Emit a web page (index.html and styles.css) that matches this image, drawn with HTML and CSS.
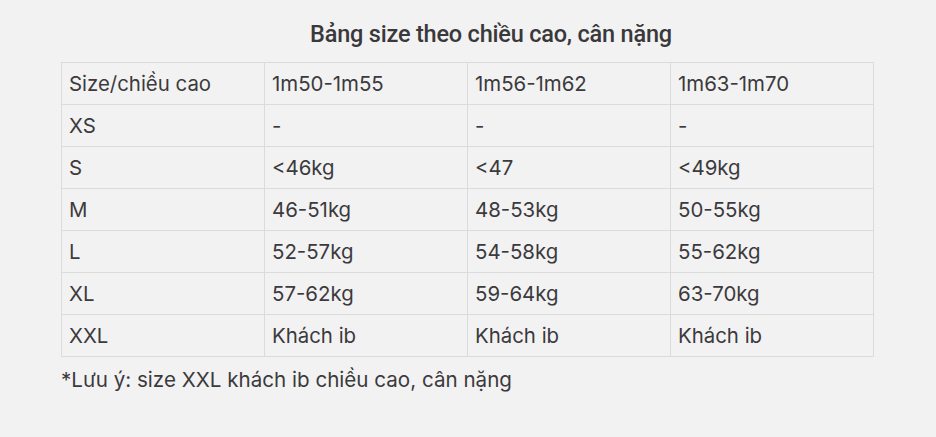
FILE: index.html
```html
<!DOCTYPE html>
<html lang="vi">
<head>
<meta charset="utf-8">
<link rel="stylesheet" href="styles.css">
</head>
<body>
<div class="page">
  <h1 class="title">Bảng size theo chiều cao, cân nặng</h1>
  <table class="size-table">
    <tr><td>Size/chiều cao</td><td>1m50-1m55</td><td>1m56-1m62</td><td>1m63-1m70</td></tr>
    <tr><td>XS</td><td>-</td><td>-</td><td>-</td></tr>
    <tr><td>S</td><td>&lt;46kg</td><td>&lt;47</td><td>&lt;49kg</td></tr>
    <tr><td>M</td><td>46-51kg</td><td>48-53kg</td><td>50-55kg</td></tr>
    <tr><td>L</td><td>52-57kg</td><td>54-58kg</td><td>55-62kg</td></tr>
    <tr><td>XL</td><td>57-62kg</td><td>59-64kg</td><td>63-70kg</td></tr>
    <tr><td>XXL</td><td>Khách ib</td><td>Khách ib</td><td>Khách ib</td></tr>
  </table>
  <p class="note">*Lưu ý: size XXL khách ib chiều cao, cân nặng</p>
</div>
</body>
</html>
```
FILE: styles.css
```css
html, body {
  margin: 0;
  padding: 0;
}
body {
  width: 936px;
  height: 437px;
  background: #f3f2f2;
  color: #3b3a3d;
  font-family: Inter, "Noto Sans", sans-serif;
  overflow: hidden;
}
.page {
  padding: 18px 0 0 61px;
}
.title {
  margin: 0 0 12px 0;
  width: 813px;
  box-sizing: border-box;
  padding-left: 47px;
  text-align: center;
  font-family: Roboto, "Noto Sans", sans-serif;
  font-weight: 500;
  font-size: 23.5px;
  line-height: 32px;
  letter-spacing: -0.2px;
  color: #39383b;
}
.size-table {
  border-collapse: collapse;
  width: 813px;
  table-layout: fixed;
}
.size-table td {
  border: 1px solid #dcdbdb;
  height: 41px;
  padding: 0 0 0 7px;
  font-size: 20.4px;
  line-height: 41px;
  vertical-align: middle;
  box-sizing: border-box;
  white-space: nowrap;
}
.note {
  margin: 7px 0 0 0;
  font-size: 20.6px;
  line-height: 32px;
}
```
